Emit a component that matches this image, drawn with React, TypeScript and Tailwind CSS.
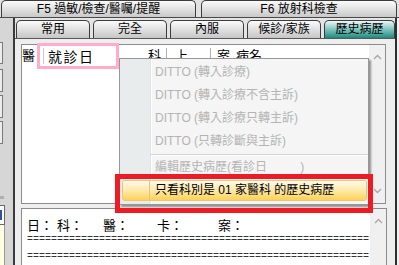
import React from 'react';

const subTabs = ['常用', '完全', '內服', '候診/家族'];

const dittoItems = [
  'DITTO (轉入診療)',
  'DITTO (轉入診療不含主訴)',
  'DITTO (轉入診療只轉主訴)',
  'DITTO (只轉診斷與主訴)',
];

const ChevronUp = () => (
  <svg width="9" height="6" viewBox="0 0 9 6">
    <path d="M1 5 L4.5 1.5 L8 5" fill="none" stroke="#a8a8a8" strokeWidth="1.3" />
  </svg>
);

const ChevronDown = () => (
  <svg width="9" height="6" viewBox="0 0 9 6">
    <path d="M1 1 L4.5 4.5 L8 1" fill="none" stroke="#a8a8a8" strokeWidth="1.3" />
  </svg>
);

const App: React.FC = () => {
  return (
    <div className="relative w-[399px] h-[265px] overflow-hidden bg-[#e2e2e2] text-black font-['Liberation_Sans','Noto_Sans_CJK_TC',sans-serif]">
      {/* Top function-key tabs */}
      <div className="flex h-[18px] items-end pl-[1px] gap-[5px] border-b border-[#4a4a4a]">
        <div className="w-[195px] h-[17px] rounded-t-[5px] border border-b-0 border-[#3c3c3c] bg-linear-to-b from-[#fbfbfb] to-[#c9c9c9] text-[12px] leading-[16px] text-center">
          F5 過敏/檢查/醫囑/提醒
        </div>
        <div className="w-[196px] h-[17px] rounded-t-[5px] border border-b-0 border-[#3c3c3c] bg-linear-to-b from-[#fbfbfb] to-[#c9c9c9] text-[12px] leading-[16px] text-center">
          F6 放射科檢查
        </div>
      </div>

      <div className="flex h-[247px]">
        {/* Left side strip */}
        <div className="w-[13px] bg-[#d6d6d6] flex flex-col pt-[24px]">
          <div className="w-[3px] h-[22px] border border-l-0 border-[#7a7a7a] bg-[#ececec]" />
          <div className="w-[3px] h-[23px] mt-[5px] border border-l-0 border-[#7a7a7a] bg-[#ececec]" />
          <div className="w-[3px] h-[23px] mt-[3px] border border-l-0 border-[#7a7a7a] bg-[#ececec]" />
          <div className="w-[3px] h-[23px] mt-[3px] border border-l-0 border-[#7a7a7a] bg-[#ececec]" />
          <div className="w-[4px] h-[3px] mt-[52px] bg-[#b0b0b0]" />
          <div className="w-[5px] h-[20px] mt-[6px] border border-l-0 border-[#6a6a6a] bg-white flex items-center">
            <div className="w-[2px] h-[10px] bg-[#3050a0]" />
          </div>
          <div className="w-[5px] flex-1 border-r border-[#9a9a9a] bg-[#ffffe1]" />
        </div>
        <div className="w-[2px] bg-[#3a3a3a]" />

        {/* Main panel */}
        <div className="w-[380px] flex flex-col bg-[#e4e4e4]">
          <div className="flex h-[24px] items-end pl-[1px] gap-[3px]">
            {subTabs.map((t) => (
              <div
                key={t}
                className="w-[74px] h-[18px] rounded-t-[5px] border border-b-0 border-[#3c3c3c] bg-linear-to-b from-[#fbfbfb] to-[#c6c6c6] text-[12px] leading-[17px] text-center"
              >
                {t}
              </div>
            ))}
            <div className="flex-1 h-[18px] rounded-t-[5px] border border-b-0 border-[#3c3c3c] bg-linear-to-b from-[#eef8f6] via-[#7cc4bc] to-[#138a80] text-[12px] leading-[17px] text-center">
              歷史病歷
            </div>
          </div>

          <div className="flex-1 flex flex-col border-t border-[#5a5a5a] bg-[#eeeeee] pl-[6px] pt-[5px]">
            {/* History list */}
            <div className="relative w-[365px] h-[160px] flex border border-[#8c8c8c] bg-white">
              <div className="flex-1 pt-[3px]">
                <div className="flex h-[16px] items-center text-[13px] leading-[16px]">
                  <span className="w-[21px]">醫</span>
                  <span className="w-[105px] h-[16px] border-l border-[#b0b0b0]" />
                  <span className="w-[18px]">科</span>
                  <span className="w-[44px] border-l border-[#b0b0b0] pl-[8px]">上</span>
                  <span className="border-l border-[#b0b0b0] pl-[6px]">案</span>
                  <span className="pl-[6px]">病名</span>
                </div>
              </div>
              <div className="w-[16px] bg-[#f0f0f0] flex flex-col items-center justify-between py-[9px]">
                <ChevronUp />
                <ChevronDown />
              </div>

              {/* pink highlight on the 就診日 column header */}
              <div className="absolute left-[15px] top-[-2px] w-[82px] h-[26px] border-[3px] border-[#ffadc9] bg-white flex items-center">
                <div className="w-[1px] h-[16px] ml-[3px] bg-[#c8c8c8]" />
                <span className="ml-[4px] text-[14px] tracking-[1.5px] font-['Noto_Sans_CJK_TC',serif]">就診日</span>
              </div>
            </div>

            {/* Record text */}
            <div className="w-[366px] flex-1 mt-[4px] flex border border-b-0 border-[#8c8c8c] bg-white">
              <div className="flex-1 pl-[5px] pt-[10px] font-['Noto_Sans_CJK_TC',serif] text-[13px]">
                <div className="flex h-[12px] items-center leading-[12px]">
                  <span>日：</span>
                  <span className="ml-[4px]">科：</span>
                  <span className="ml-[20px]">醫：</span>
                  <span className="ml-[28px]">卡：</span>
                  <span className="ml-[35px]">案：</span>
                </div>
                <div className="font-['Liberation_Mono',monospace] text-[10px] leading-[17px] whitespace-nowrap text-[#333]">
                  =========================================================
                </div>
                <div className="font-['Liberation_Mono',monospace] text-[10px] leading-[17px] whitespace-nowrap text-[#333]">
                  =========================================================
                </div>
              </div>
              <div className="w-[16px] bg-[#f0f0f0] flex justify-center pt-[9px]">
                <ChevronUp />
              </div>
            </div>
          </div>
        </div>

        <div className="w-[2px] bg-[#2e2e2e]" />
        <div className="w-[2px] bg-[#f0f0f0]" />
      </div>

      {/* Context menu */}
      <div className="absolute left-[119px] top-[58px] w-[250px] border border-[#979797] py-[2px] shadow-[2px_2px_2px_rgba(0,0,0,0.4)] bg-[linear-gradient(to_right,#e8ecec_0,#e8ecec_30px,#e0e2e2_30px,#e0e2e2_31px,#ffffff_31px,#ffffff_32px,#f5f5f5_32px)] text-[12px]">
        {dittoItems.map((d) => (
          <div key={d} className="h-[23px] pl-[35px] leading-[23px] text-[#b4b4b4]">
            {d}
          </div>
        ))}
        <div className="h-[3px] ml-[31px] pt-[1px]">
          <div className="h-[1px] bg-[#d4d4d4]" />
          <div className="h-[1px] bg-white" />
        </div>
        <div className="h-[23px] pl-[35px] leading-[23px] text-[#b4b4b4]">
          編輯歷史病歷(看診日&nbsp;&nbsp;&nbsp;&nbsp;&nbsp;&nbsp;&nbsp;&nbsp;&nbsp;&nbsp;)
        </div>
        <div className="h-[23px] py-[1px] pl-[2px] pr-[1px]">
          <div className="h-full flex rounded-[3px] border border-[#e6c77a] bg-linear-to-b from-[#fffaea] via-[#ffe9a8] to-[#ffd24f]">
            <div className="w-[27px] border-r border-[#d9c48a]" />
            <span className="pl-[5px] leading-[19px]">只看科別是 01 家醫科 的歷史病歷</span>
          </div>
        </div>
      </div>

      {/* Red annotation box */}
      <div className="absolute left-[115px] top-[174px] w-[258px] h-[39px] border-[5px] border-[#ed1c24]" />
    </div>
  );
};

export default App;
